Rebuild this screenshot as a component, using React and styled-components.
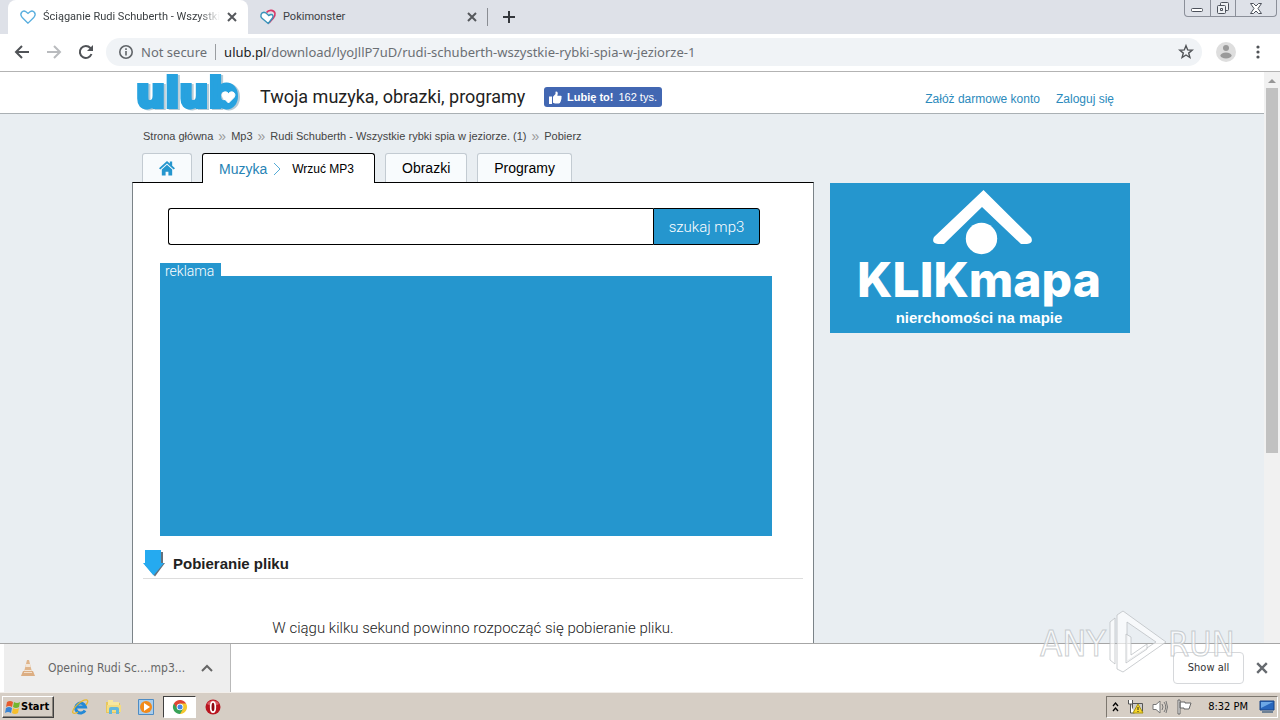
import React from "react";
import styled, { createGlobalStyle } from "styled-components";

const ui = '"DejaVu Sans Condensed", "DejaVu Sans", "Noto Sans", sans-serif';
const web = '"Liberation Sans", Arial, sans-serif';
const blue = "#2596ce";

const Global = createGlobalStyle`
  *, *::before, *::after { box-sizing: border-box; }
  body { margin: 0; background: #fff; font-family: ${web}; color: #222; }
  a { color: inherit; text-decoration: none; }
  button, input { font: inherit; color: inherit; }
  svg { display: block; flex: none; overflow: visible; }
`;

const Desktop = styled.div`
  position: relative;
  display: flex;
  flex-direction: column;
  height: 100vh;
  overflow: hidden;
`;

const PlainButton = styled.button`
  display: flex;
  align-items: center;
  justify-content: center;
  padding: 0;
  border: 0;
  background: none;
`;

/* Browser chrome */
const TabStrip = styled.div`
  display: flex;
  flex: none;
  height: 34px;
  padding-left: 8px;
  background: #dee1e8;
`;

const BrowserTab = styled.div`
  display: flex;
  align-items: center;
  width: 240px;
  padding: 0 11px 0 12px;
  gap: 7px;
  border-radius: 8px 8px 0 0;
  background: ${(p) => (p.$active ? "#fff" : "transparent")};
  font: 11px/16px Roboto, sans-serif;
  color: #3c4043;
`;

const TabTitle = styled.span`
  flex: 1;
  overflow: hidden;
  white-space: nowrap;
  mask-image: ${(p) => (p.$fade ? "linear-gradient(to right, #000 88%, transparent)" : "none")};
`;

const NewTab = styled(PlainButton)`
  width: 42px;
  height: 18px;
  margin: 8px 0 0 -1px;
  border-left: 1px solid #8a8d93;
`;

const WindowButtons = styled.div`
  display: flex;
  height: 17px;
  margin: 0 3px 0 auto;
  border: 1px solid #8b8f99;
  border-top: 0;
  border-radius: 0 0 4px 4px;
`;

const WindowButton = styled(PlainButton)`
  width: ${(p) => (p.$wide ? 41 : 25)}px;
  & + & { border-left: 1px solid #8b8f99; }
`;

const Toolbar = styled.div`
  display: flex;
  flex: none;
  align-items: center;
  height: 38px;
  padding: 0 6px 2px;
  border-bottom: 1px solid #b3b3b3;
  background: #fff;
`;

const ToolButton = styled(PlainButton)`
  width: 32px;
  height: 32px;
`;

const AddressBar = styled.div`
  display: flex;
  flex: 1;
  align-items: center;
  height: 28px;
  margin: 0 8px 0 4px;
  padding: 0 8px 0 12px;
  border-radius: 14px;
  background: #f0f3f6;
  font: 13px/20px "Noto Sans", sans-serif;
  color: #6b6f74;
`;

const Security = styled.span`
  margin-left: 7px;
  padding-right: 8px;
  border-right: 1px solid #9a9da1;
  line-height: 16px;
`;

const Url = styled.span`
  flex: 1;
  margin-left: 8px;
  white-space: nowrap;
  b { font-weight: 400; color: #202124; }
`;

/* Web page */
const Viewport = styled.div`
  display: flex;
  flex: 1;
  min-height: 0;
  background: #e9eef2;
`;

const Page = styled.div`
  flex: 1;
  min-width: 0;
  overflow: hidden;
`;

const ScrollTrack = styled.div`
  width: 16px;
  padding: 0 2px;
  background: #f1f1f1;
`;

const ScrollThumb = styled.div`
  height: 64%;
  background: #c1c1c1;
`;

const SiteHeader = styled.header`
  height: 42px;
  border-bottom: 1px solid #aab0b4;
  background: #fff;
`;

const Container = styled.div`
  width: 100%;
  max-width: 1000px;
  margin: 0 auto;
`;

const HeaderRow = styled(Container)`
  display: flex;
  align-items: flex-start;
  height: 100%;
`;

const Slogan = styled.span`
  width: 284px;
  margin: 14px 0 0 12px;
  font: 18px/22px Roboto, sans-serif;
  white-space: nowrap;
`;

const LikeButton = styled.button`
  display: flex;
  align-items: center;
  gap: 5px;
  height: 20px;
  margin-top: 15px;
  padding: 0 5px;
  border: 0;
  border-radius: 3px;
  background: #4267b2;
  color: #fff;
  font-size: 11px;
  line-height: 20px;
  white-space: nowrap;
`;

const Account = styled.nav`
  display: flex;
  gap: 16px;
  margin: 19px 18px 0 auto;
  font-size: 12px;
  line-height: 16px;
  color: #2b8abc;
`;

const Crumbs = styled.nav`
  display: flex;
  gap: 5px;
  padding: 14px 0 9px 11px;
  font-size: 11px;
  line-height: 16px;
  color: #444;
  span { color: #999; font-size: 14px; }
`;

const SiteTabs = styled.nav`
  display: flex;
  gap: 10px;
  height: 30px;
  padding-left: 10px;
`;

const SiteTab = styled.div`
  display: flex;
  align-items: center;
  height: ${(p) => (p.$active ? 30 : 29)}px;
  padding: 0 16px;
  border: 1px solid ${(p) => (p.$active ? "#000" : "#c3cbd2")};
  border-bottom: 0;
  border-radius: 3px 3px 0 0;
  background: ${(p) => (p.$active ? "#fff" : "#f8fbfd")};
  color: #000;
  font-size: 14px;
  z-index: 1;
`;

const ActiveName = styled.a`
  margin-right: 6px;
  color: #2683b5;
`;

const Upload = styled.a`
  margin: 0 4px 0 11px;
  font-size: 12px;
`;

const Columns = styled.div`
  display: flex;
  align-items: flex-start;
  gap: 16px;
  margin-top: -1px;
`;

const Panel = styled.main`
  flex: 1;
  max-width: 682px;
  min-height: 520px;
  padding: 25px 10px 0;
  border: 1px solid #7b8388;
  border-top-color: #000;
  background: #fff;
`;

const Search = styled.form`
  display: flex;
  height: 37px;
  margin: 0 43px 18px 25px;
`;

const SearchInput = styled.input`
  flex: 1;
  min-width: 0;
  padding: 0 10px;
  border: 1px solid #000;
  border-right: 0;
  border-radius: 3px 0 0 3px;
  background: #fff;
  outline: none;
`;

const SearchButton = styled.button`
  width: 107px;
  padding: 0;
  border: 1px solid #000;
  border-radius: 0 3px 3px 0;
  background: ${blue};
  color: #fff;
  font: 300 15px/20px Roboto, sans-serif;
`;

const Ad = styled.section`
  margin: 0 31px 0 17px;
`;

const AdLabel = styled.div`
  width: 61px;
  height: 13px;
  padding-left: 5px;
  background: ${blue};
  color: #fff;
  font: 300 14px/16px Roboto, sans-serif;
`;

const AdSpace = styled.div`
  height: 260px;
  background: ${blue};
`;

const SectionTitle = styled.h1`
  display: flex;
  align-items: center;
  gap: 8px;
  height: 29px;
  margin: 14px 0 40px;
  border-bottom: 1px solid #ddd;
  font-size: 15px;
  line-height: 20px;
`;

const Message = styled.p`
  margin: 0;
  text-align: center;
  font: 300 15px/18px Roboto, sans-serif;
`;

const Banner = styled.a`
  display: block;
  width: 300px;
  margin-top: 1px;
  background: ${blue};
`;

/* Download shelf */
const Shelf = styled.div`
  display: flex;
  flex: none;
  align-items: center;
  height: 49px;
  padding: 0 12px 0 4px;
  border-top: 1px solid #a6a6a6;
  background: #fff;
`;

const Download = styled.div`
  display: flex;
  align-items: center;
  width: 227px;
  height: 48px;
  padding: 0 17px 0 15px;
  border-right: 1px solid #b9b9b9;
  background: #eee;
  color: #666;
  font: 12px/20px ${ui};
  white-space: nowrap;
`;

const DownloadName = styled.span`
  flex: 1;
  margin-left: 11px;
`;

const ShowAll = styled.button`
  width: 71px;
  height: 32px;
  margin: 0 12px 0 auto;
  padding: 0;
  border: 1px solid #d6d8db;
  border-radius: 4px;
  background: #fff;
  color: #333;
  font: 11px/16px ${ui};
`;

/* Taskbar */
const Taskbar = styled.div`
  display: flex;
  flex: none;
  align-items: center;
  height: 28px;
  padding: 0 2px;
  border-top: 1px solid #f2eeea;
  background: #d6cec5;
  font: 11px/16px ${ui};
  color: #000;
`;

const Start = styled.button`
  display: flex;
  align-items: center;
  width: 52px;
  height: 22px;
  padding: 0 2px;
  border: 1px solid;
  border-color: #fff #404040 #404040 #fff;
  box-shadow: inset -1px -1px #8b857d;
  background: #d6cec5;
  font-weight: 700;
`;

const Launcher = styled.div`
  display: flex;
  gap: 1px;
  margin-left: 10px;
`;

const TaskButton = styled(PlainButton)`
  width: ${(p) => (p.$active ? 33 : 32)}px;
  height: 22px;
  border: 1px solid;
  border-color: ${(p) => (p.$active ? "#404040 #fff #fff #404040" : "transparent")};
  background: ${(p) => (p.$active ? "#fff" : "transparent")};
`;

const Tray = styled.div`
  display: flex;
  align-items: center;
  gap: 8px;
  height: 22px;
  margin-left: auto;
  padding: 0 2px 0 5px;
  border: 1px solid;
  border-color: #7d776f #fff #fff #7d776f;
`;

const Clock = styled.time`
  margin: 0 3px 0 8px;
`;

const Watermark = styled.div`
  position: absolute;
  right: 44px;
  bottom: 44px;
  pointer-events: none;
`;

const Cross = ({ size = 10, color = "#55585c", width = 2 }) => (
  <svg width={size} height={size} viewBox="0 0 10 10" stroke={color} strokeWidth={width}>
    <path d="M1 1l8 8M9 1L1 9" />
  </svg>
);

const Heart = () => (
  <svg width="16" height="16" viewBox="0 0 16 16" fill="#fff" stroke="#58aede" strokeWidth="1.3">
    <path d="M8 14.2L2 8.2C-1 4.5 2.8.5 6 2.7L8 4.5l2-1.8c3.2-2.2 7 1.8 4 5.5z" />
  </svg>
);

const DoubleHeart = () => (
  <svg width="16" height="16" viewBox="0 0 16 16" fill="none" strokeWidth="1.6" strokeLinejoin="round">
    <path d="M6.500 3.500C8.500.5 14 .5 15 4.200c.5 2.500-1 4-2.200 5.600L9 14" stroke="#d93868" />
    <path d="M8.200 14.500L2 9.300C-.2 7 1 3.300 4 3.200c2 0 3 1.600 4.600 3.300l2.200-1c2-.3 2.800 1.600 1.700 3.500z" fill="#fff" stroke="#3a92b9" strokeWidth="1.400" />
  </svg>
);

const Back = ({ flip }) => (
  <svg width="16" height="16" viewBox="0 0 16 16" fill="none" stroke={flip ? "#b9bbbe" : "#505357"} strokeWidth="2">
    <path d={flip ? "M1 8h13M8 2l6 6-6 6" : "M15 8H2M8 2L2 8l6 6"} />
  </svg>
);

const Reload = () => (
  <svg width="16" height="16" viewBox="0 0 16 16" fill="none" stroke="#505357" strokeWidth="2">
    <path d="M13.5 10A6 6 0 1 1 12.4 4L14 5.7" />
    <path d="M15 1v6H9z" fill="#505357" stroke="none" />
  </svg>
);

const Info = () => (
  <svg width="16" height="16" viewBox="0 0 16 16" fill="none" stroke="#606468" strokeWidth="1.6">
    <circle cx="8" cy="8" r="6.2" />
    <path d="M8 7v4.5M8 4.2v1.7" />
  </svg>
);

const Star = () => (
  <svg width="16" height="16" viewBox="0 0 16 16" fill="none" stroke="#505357" strokeWidth="1.4">
    <path d="M8 1.7l1.7 4.2 4.5.3-3.5 2.9 1.2 4.4L8 11l-3.900 2.500 1.200-4.400-3.500-2.900 4.500-.3z" />
  </svg>
);

const Avatar = () => (
  <svg width="20" height="20" viewBox="0 0 20 20">
    <circle cx="10" cy="10" r="10" fill="#dedede" />
    <circle cx="10" cy="6" r="3" fill="#9a9a9a" />
    <ellipse cx="10" cy="13.5" rx="5.6" ry="3" fill="#9a9a9a" />
  </svg>
);

const LogoSvg = styled.svg`
  text { filter: drop-shadow(2px 1px 0 #b8cbd6); }
`;

const UlubLogo = () => (
  <LogoSvg width="116" height="40" viewBox="0 0 116 40" role="img" aria-label="ulub">
    <text x="4" y="35" fill="#27a2df" stroke="#27a2df" strokeWidth="4" fontFamily="DejaVu Sans, sans-serif" fontWeight="700" fontSize="41">ulub</text>
    <path d="M96.500 31l-5.500-5.500c-3-4 2-8 5.500-4 3.500-4 8.500 0 5.500 4z" fill="#fff" stroke="#fff" />
  </LogoSvg>
);

const Thumb = () => (
  <svg width="13" height="13" viewBox="0 0 13 13" fill="#fff">
    <path d="M0 5.500h3V13H0zM4 5.800L6.500 3V.7Q8.800 0 8.800 2.500L8.300 4.800H12q1.500 1 .3 2.300.8 1.200-.4 2 .5 1.200-.6 1.800.1 1.400-1.500 1.600H6L4 11.800z" />
  </svg>
);

const Home = () => (
  <svg width="16" height="16" viewBox="0 0 17 16" fill="#2596ce">
    <path d="M0 8.200L8.500.5l3 2.700V1h2.500v4.500l3 2.700-1.400 1.400L8.500 3.200 1.400 9.600z" />
    <path d="M3 9.500l5.500-5 5.500 5V16h-4v-4H7v4H3z" />
  </svg>
);

const Chevron = () => (
  <svg width="8" height="14" viewBox="0 0 8 14" fill="none" stroke="#55acd7">
    <path d="M1 1l6 6-6 6" />
  </svg>
);

const DownArrow = () => (
  <svg width="22" height="27" viewBox="0 0 22 27">
    <path d="M4 1h16v11h2L12 25.500 2 14z" fill="#65717c" />
    <path d="M2 -1h16v13h3L10.500 24.500 0 12h2z" fill="#25aaf0" />
  </svg>
);

const BannerArt = () => (
  <svg width="300" height="150" viewBox="0 0 300 150" fill="#fff">
    <path d="M153.500 7L201 54q3 6-4 7h-6L152 24l-38 37h-6q-7-1-4-7z" />
    <circle cx="151.500" cy="55.500" r="15.700" />
    <text x="149" y="114" textAnchor="middle" fontFamily="Inter, sans-serif" fontWeight="800" fontSize="48">KLIKmapa</text>
    <text x="149" y="140" textAnchor="middle" fontFamily="Liberation Sans, sans-serif" fontWeight="700" fontSize="15">nierchomości na mapie</text>
  </svg>
);

const Cone = () => (
  <svg width="18" height="18" viewBox="0 0 18 18">
    <path d="M5 13L8 1h2l3 12z" fill="#e0b58b" />
    <path d="M7 5h4l.7 3H6.300zM5.500 11h7l.5 2H5z" fill="#f3e6d8" />
    <path d="M4 12h10l2 5H2z" fill="#dcae83" />
    <path d="M5 13h8v1H5z" fill="#f2dfcb" />
  </svg>
);

const Windows = () => (
  <svg width="16" height="16" viewBox="0 0 16 16">
    <path d="M2 3q3-2 6 0L7 8Q4 6 1 8z" fill="#e65b2d" />
    <path d="M9 3q3 2 6 0l-1 5q-3 2-6 0z" fill="#73b62f" />
    <path d="M1 9q3-2 6 0l-1 5q-3-2-6 0z" fill="#3984d4" />
    <path d="M8 9q3 2 6 0l-1 5q-3 2-6 0z" fill="#f6be2b" />
  </svg>
);

const Explorer = () => (
  <svg width="17" height="16" viewBox="0 0 17 16" fill="none">
    <path d="M13 11.500A5 5 0 1 1 13.500 8H5" stroke="#2489d6" strokeWidth="3" />
    <path d="M1 14C-1 10 10 0 15 1q2 1-1 5M1 14q2 1 5-1" stroke="#e7b92f" strokeWidth="1.300" />
  </svg>
);

const Folder = () => (
  <svg width="17" height="16" viewBox="0 0 17 16">
    <path d="M1 3h6l1 1h7v10H1z" fill="#e8c75b" />
    <path d="M3 1h5v2h6v3H3z" fill="#f8e79e" />
    <path d="M2 6h14v7H2z" fill="#f3dc82" />
    <path d="M4 15V10q0-2 2-2h6q2 0 2 2v5h-3v-4H7v4z" fill="#63b7dc" />
  </svg>
);

const Player = () => (
  <svg width="16" height="16" viewBox="0 0 16 16">
    <path d="M.5.5h15v15H.5z" fill="#aacdeb" stroke="#4e8cc4" />
    <circle cx="8" cy="8" r="6" fill="#f28a1a" />
    <path d="M6 4l6 4-6 4z" fill="#fff" />
  </svg>
);

const Chrome = () => (
  <svg width="14" height="14" viewBox="0 0 14 14">
    <path d="M7 7V0L13.100 3.500A7 7 0 0 1 7 14z" fill="#f5c72e" />
    <path d="M7 7L.9 3.500A7 7 0 0 0 7 14l3-5z" fill="#38a257" />
    <path d="M.9 3.500A7 7 0 0 1 13.100 3.500H7L4 8z" fill="#df4534" />
    <circle cx="7" cy="7" r="3.300" fill="#fff" />
    <circle cx="7" cy="7" r="2.500" fill="#4387e6" />
  </svg>
);

const Opera = () => (
  <svg width="16" height="16" viewBox="0 0 16 16">
    <circle cx="8" cy="8" r="7.500" fill="#b91520" />
    <path d="M2 5a7 7 0 0 1 12 0q-6 4-12 0" fill="#dc5961" />
    <ellipse cx="8" cy="8" rx="2.300" ry="5.200" fill="#8d0711" stroke="#fff" strokeWidth="1.700" />
  </svg>
);

const Network = () => (
  <svg width="17" height="16" viewBox="0 0 17 16" fill="#fff" stroke="#555">
    <path d="M5.500 4.500h10v8h-10z" fill="#ccc" />
    <path d="M1.500 1v4h4V1M3.500 5v9h4" />
    <path d="M11 5l5 9H6z" fill="#f8d72b" stroke="#aa9410" />
    <path d="M11 8v3M11 12v1" stroke="#222" />
  </svg>
);

const Speaker = () => (
  <svg width="16" height="16" viewBox="0 0 16 16" fill="none" stroke="#777">
    <path d="M1 5.500h3L8 2v12l-4-3.500H1z" fill="#fff" />
    <path d="M10 5q2 3 0 6M12 3q3.500 5 0 10M14 2q3 6 0 12" />
  </svg>
);

const Flag = () => (
  <svg width="16" height="16" viewBox="0 0 16 16" fill="#fff" stroke="#666">
    <path d="M2 1h2v14H2zM4 3h5v1h6l-2 6H8V9H4z" />
  </svg>
);

const Monitor = () => (
  <svg width="16" height="14" viewBox="0 0 16 14">
    <path d="M1 1h14v9H1z" fill="#2867bd" stroke="#184484" />
    <path d="M2 2h12L2 8z" fill="#6ca8e6" />
    <path d="M3 11h11v2H3z" fill="#6f8195" />
  </svg>
);

const AnyRunMark = () => (
  <svg width="196" height="68" viewBox="0 0 196 68" fill="#fff" fillOpacity=".65" stroke="#b9bec2" strokeOpacity=".75" strokeWidth="1">
    <g fontFamily="DejaVu Sans Condensed, sans-serif" fontSize="36">
      <text x="0" y="48">ANY</text>
      <text x="128" y="48" fontSize="34">RUN</text>
    </g>
    <path fillRule="evenodd" d="M83 3l43 31-43 30-6-3V7zm4 11v39l29-19z" />
    <path d="M75 10v46l-5-4V14zM91 29v18l16-11v5L86 55V26z" />
  </svg>
);

export default function App() {
  return (
    <>
      <Global />
      <Desktop>
        <TabStrip>
          <BrowserTab $active>
            <Heart />
            <TabTitle $fade>Ściąganie Rudi Schuberth - Wszystki</TabTitle>
            <PlainButton aria-label="Close tab"><Cross /></PlainButton>
          </BrowserTab>
          <BrowserTab>
            <DoubleHeart />
            <TabTitle>Pokimonster</TabTitle>
            <PlainButton aria-label="Close tab"><Cross /></PlainButton>
          </BrowserTab>
          <NewTab aria-label="New tab">
            <svg width="12" height="12" viewBox="0 0 12 12" stroke="#34373c" strokeWidth="2"><path d="M6 0v12M0 6h12" /></svg>
          </NewTab>
          <WindowButtons>
            <WindowButton aria-label="Minimize">
              <svg width="13" height="10" viewBox="0 0 13 10" fill="#fff" stroke="#4c515b"><rect x=".5" y="5.500" width="11" height="3" rx="1" /></svg>
            </WindowButton>
            <WindowButton aria-label="Restore">
              <svg width="14" height="13" viewBox="0 0 14 13" fill="#eef0f3" stroke="#4c515b"><rect x="4.500" y=".5" width="8" height="8" rx="1" /><rect x="1.500" y="3.500" width="8" height="8" rx="1" /><path d="M4.500 6.500h2v2h-2z" /></svg>
            </WindowButton>
            <WindowButton $wide aria-label="Close">
              <svg width="12" height="11" viewBox="0 0 12 11" fill="#fff" stroke="#4c515b"><path d="M.5.500h3L6 3 8.500.500h3L8 5.500l3.500 5h-3L6 8l-2.500 2.500h-3l3.500-5z" /></svg>
            </WindowButton>
          </WindowButtons>
        </TabStrip>
        <Toolbar>
          <ToolButton aria-label="Back"><Back /></ToolButton>
          <ToolButton aria-label="Forward"><Back flip /></ToolButton>
          <ToolButton aria-label="Reload"><Reload /></ToolButton>
          <AddressBar>
            <Info />
            <Security>Not secure</Security>
            <Url><b>ulub.pl</b>/download/lyoJllP7uD/rudi-schuberth-wszystkie-rybki-spia-w-jeziorze-1</Url>
            <PlainButton aria-label="Bookmark"><Star /></PlainButton>
          </AddressBar>
          <ToolButton aria-label="Profile"><Avatar /></ToolButton>
          <ToolButton aria-label="Menu">
            <svg width="4" height="14" viewBox="0 0 4 14" fill="#505357"><circle cx="2" cy="2" r="1.600" /><circle cx="2" cy="7" r="1.600" /><circle cx="2" cy="12" r="1.600" /></svg>
          </ToolButton>
        </Toolbar>

        <Viewport>
          <Page>
            <SiteHeader>
              <HeaderRow>
                <a href="#home"><UlubLogo /></a>
                <Slogan>Twoja muzyka, obrazki, programy</Slogan>
                <LikeButton><Thumb /><b>Lubię to!</b>162 tys.</LikeButton>
                <Account>
                  <a href="#register">Załóż darmowe konto</a>
                  <a href="#login">Zaloguj się</a>
                </Account>
              </HeaderRow>
            </SiteHeader>
            <Container>
              <Crumbs>
                <a href="#home">Strona główna</a><span>»</span>
                <a href="#mp3">Mp3</a><span>»</span>
                <a href="#file">Rudi Schuberth - Wszystkie rybki spia w jeziorze. (1)</a><span>»</span>
                <a href="#download">Pobierz</a>
              </Crumbs>
              <SiteTabs>
                <SiteTab as="a" href="#home" aria-label="Home"><Home /></SiteTab>
                <SiteTab $active>
                  <ActiveName href="#music">Muzyka</ActiveName>
                  <Chevron />
                  <Upload href="#upload">Wrzuć MP3</Upload>
                </SiteTab>
                <SiteTab as="a" href="#images">Obrazki</SiteTab>
                <SiteTab as="a" href="#programs">Programy</SiteTab>
              </SiteTabs>
              <Columns>
                <Panel>
                  <Search onSubmit={(e) => e.preventDefault()}>
                    <SearchInput type="text" aria-label="szukaj mp3" />
                    <SearchButton>szukaj mp3</SearchButton>
                  </Search>
                  <Ad>
                    <AdLabel>reklama</AdLabel>
                    <AdSpace />
                  </Ad>
                  <SectionTitle><DownArrow />Pobieranie pliku</SectionTitle>
                  <Message>W ciągu kilku sekund powinno rozpocząć się pobieranie pliku.</Message>
                </Panel>
                <Banner href="#klikmapa"><BannerArt /></Banner>
              </Columns>
            </Container>
          </Page>
          <ScrollTrack>
            <svg width="12" height="16" viewBox="0 0 12 16" fill="#969696"><path d="M2 11l4-4 4 4z" /></svg>
            <ScrollThumb />
          </ScrollTrack>
        </Viewport>

        <Shelf>
          <Download>
            <Cone />
            <DownloadName>Opening Rudi Sc....mp3...</DownloadName>
            <PlainButton aria-label="Download options">
              <svg width="12" height="8" viewBox="0 0 12 8" fill="none" stroke="#666" strokeWidth="2"><path d="M1 7l5-5 5 5" /></svg>
            </PlainButton>
          </Download>
          <ShowAll>Show all</ShowAll>
          <PlainButton aria-label="Close downloads"><Cross size={12} color="#666a6f" /></PlainButton>
        </Shelf>

        <Taskbar>
          <Start><Windows />Start</Start>
          <Launcher>
            <TaskButton aria-label="Internet Explorer"><Explorer /></TaskButton>
            <TaskButton aria-label="Files"><Folder /></TaskButton>
            <TaskButton aria-label="Media Player"><Player /></TaskButton>
            <TaskButton $active aria-label="Chrome"><Chrome /></TaskButton>
            <TaskButton aria-label="Opera"><Opera /></TaskButton>
          </Launcher>
          <Tray>
            <svg width="7" height="10" viewBox="0 0 7 10" fill="none" stroke="#000" strokeWidth="1.300"><path d="M1 4l2.500-3L6 4M1 9l2.500-3L6 9" /></svg>
            <Network />
            <Speaker />
            <Flag />
            <Clock>8:32 PM</Clock>
            <Monitor />
          </Tray>
        </Taskbar>
        <Watermark><AnyRunMark /></Watermark>
      </Desktop>
    </>
  );
}
